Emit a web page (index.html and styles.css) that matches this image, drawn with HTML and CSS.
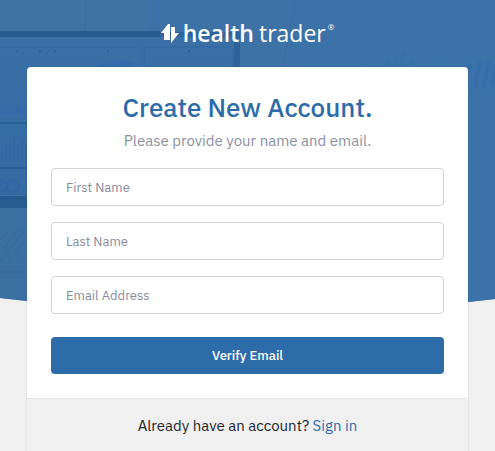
FILE: index.html
```html
<!DOCTYPE html>
<html lang="en">
<head>
    <meta charset="utf-8">
    <meta name="viewport" content="width=device-width, initial-scale=1">
    <title>Create New Account</title>
    <link rel="stylesheet" href="styles.css">
</head>
<body>
    <svg class="hero" viewBox="0 0 495 324" preserveAspectRatio="none" aria-hidden="true">
        <defs>
            <clipPath id="hero-shape">
                <path d="M0 0H495V299L468 302L248 323L27 301L0 298Z"/>
            </clipPath>
            <filter id="soft" x="0" y="0" width="1" height="1">
                <feGaussianBlur stdDeviation="0.6"/>
            </filter>
            <linearGradient id="screen" x1="0" y1="0" x2="0" y2="1">
                <stop offset="0" stop-color="#3a70a7"/>
                <stop offset="1" stop-color="#336aa3"/>
            </linearGradient>
        </defs>
        <g clip-path="url(#hero-shape)">
            <rect width="495" height="324" fill="#3c72a6"/>
            <g filter="url(#soft)">
                <path d="M-5 -5H148V31H-5Z" fill="#4073a4"/>
                <path d="M84 -5H86V31H84Z" fill="#3b70a3"/>
                <path d="M296 -5H500V330H270Z" fill="#3b72a8"/>
                <path d="M295 0L283 67" stroke="#366ca2" fill="none"/>
                <!-- monitor -->
                <path d="M-5 31H160V37H-5Z" fill="#275c90"/>
                <path d="M160 32H240V67H234V47L232 37H160Z" fill="#2e6499"/>
                <path d="M-5 37H232L234 47V195H-5Z" fill="url(#screen)"/>
                <path d="M0 47H140Q142 47 142 50V67M144 67V50Q144 47 147 47H231Q233 48 233 51V67" stroke="#3269a1" fill="none"/>
                <path d="M97 67Q110 58 135 62L132 67Z" fill="#356baa"/>
                <path d="M0 106Q12 101 27 111V114H0Z" fill="#346aa9"/>
                <path d="M-5 123H32M-5 168H32" stroke="#285e93" stroke-width="2"/>
                <path d="M2 160V151M6 160V147M10 160V143M14 160V139M18 160V144M22 160V141M26 160V145" stroke="#3266a3" stroke-width="2"/>
                <circle cx="1" cy="186" r="6" stroke="#3065a8" stroke-width="2" fill="none"/>
                <circle cx="13" cy="186" r="6" stroke="#3364a5" stroke-width="2" fill="none"/>
                <path d="M16 51H17M39 51H41M54 51H56M107 51H109M188 51H190" stroke="#2b6199" stroke-width="2"/>
                <!-- keyboard -->
                <path d="M-5 196H32V208H-5Z" fill="#275c90"/>
                <path d="M-5 208H32V330H-5Z" fill="#3a6fa3"/>
                <path d="M0 240L10 228M4 248L20 228M0 262L27 228M8 263L27 239M18 264L27 252M0 272H27" stroke="#366b9f" fill="none"/>
                <!-- paper charts -->
                <path d="M361 67L363 61M386 67L388 60M393 67L397 55M401 67L405 53M409 67L412 60M422 67L424 62M431 67L433 63M440 67L443 58" stroke="#386fa9" stroke-width="3"/>
                <path d="M467 72L471 63M474 87L480 62M484 87L489 60M492 87L497 60" stroke="#366eab" stroke-width="4"/>
                <path d="M469 94H495" stroke="#386fa8" stroke-dasharray="3 2"/>
            </g>
        </g>
    </svg>

    <main class="page">
        <div class="logo">
            <svg class="logo-mark" viewBox="0 0 18 20" aria-hidden="true">
                <path d="M0 10L7 1H9V17H3V10Z"/>
                <path d="M10 4H14V10H18L10 20Z"/>
            </svg>
            <span class="logo-health">health</span>
            <span class="logo-trader">trader</span>
            <span class="logo-reg">®</span>
        </div>

        <div class="card">
            <form class="card-body">
                <h1>Create New Account.</h1>
                <p class="subtitle">Please provide your name and email.</p>
                <input class="field" type="text" placeholder="First Name" aria-label="First Name">
                <input class="field" type="text" placeholder="Last Name" aria-label="Last Name">
                <input class="field" type="email" placeholder="Email Address" aria-label="Email Address">
                <button class="btn" type="submit">Verify Email</button>
            </form>
            <div class="card-footer">
                Already have an account? <a href="#">Sign in</a>
            </div>
        </div>
    </main>
</body>
</html>
```
FILE: styles.css
```css
* {
    box-sizing: border-box;
}

body {
    margin: 0;
    background: #f0f0f0;
    color: #212529;
    font-family: "IBM Plex Sans", Roboto, sans-serif;
    font-size: 15px;
}

.hero {
    position: absolute;
    top: 0;
    left: 0;
    width: 100%;
    height: 324px;
}

.page {
    position: relative;
    display: flex;
    flex-direction: column;
    min-height: 100vh;
    padding: 0 26px;
}

.logo {
    display: flex;
    justify-content: center;
    align-items: center;
    height: 66px;
    color: #fff;
    font-family: "Open Sans", sans-serif;
    font-size: 23px;
    line-height: 32px;
}

.logo-mark {
    width: 18px;
    height: 20px;
    margin-right: 4px;
    fill: #fff;
}

.logo-health {
    font-weight: 600;
}

.logo-trader {
    margin-left: 5px;
    font-weight: 400;
}

.logo-reg {
    align-self: flex-start;
    margin: 11px 0 0 2px;
    font-size: 8px;
}

.card {
    display: flex;
    flex: 1;
    flex-direction: column;
    border: 1px solid rgba(0, 0, 0, 0.04);
    border-bottom: 0;
    border-radius: 5px 5px 0 0;
    background: #fff;
    background-clip: padding-box;
}

.card-body {
    display: flex;
    flex-direction: column;
    gap: 16px;
    padding: 24px;
}

h1 {
    margin: 0;
    color: #2d6ca8;
    font-size: 26px;
    font-weight: 500;
    line-height: 32px;
    text-align: center;
}

.subtitle {
    margin: -8px 0 1px;
    color: #8a8fa0;
    line-height: 20px;
    text-align: center;
}

.field {
    width: 100%;
    height: 38px;
    padding: 0 14px;
    border: 1px solid #ced2d9;
    border-radius: 4px;
    background: #fff;
    color: #212529;
    font-family: inherit;
    font-size: 13px;
}

.field::placeholder {
    color: #868ba0;
}

.btn {
    height: 37px;
    margin-top: 7px;
    border: 0;
    border-radius: 4px;
    background: #2d6ca8;
    color: #fff;
    font-family: inherit;
    font-size: 13px;
    font-weight: 500;
    cursor: pointer;
}

.card-footer {
    flex: 1;
    padding: 17px 24px 14px;
    border-top: 1px solid #e6e6e6;
    background: #f0f0f0;
    line-height: 20px;
    text-align: center;
}

.card-footer a {
    color: #2d6ca8;
    text-decoration: none;
}
```
